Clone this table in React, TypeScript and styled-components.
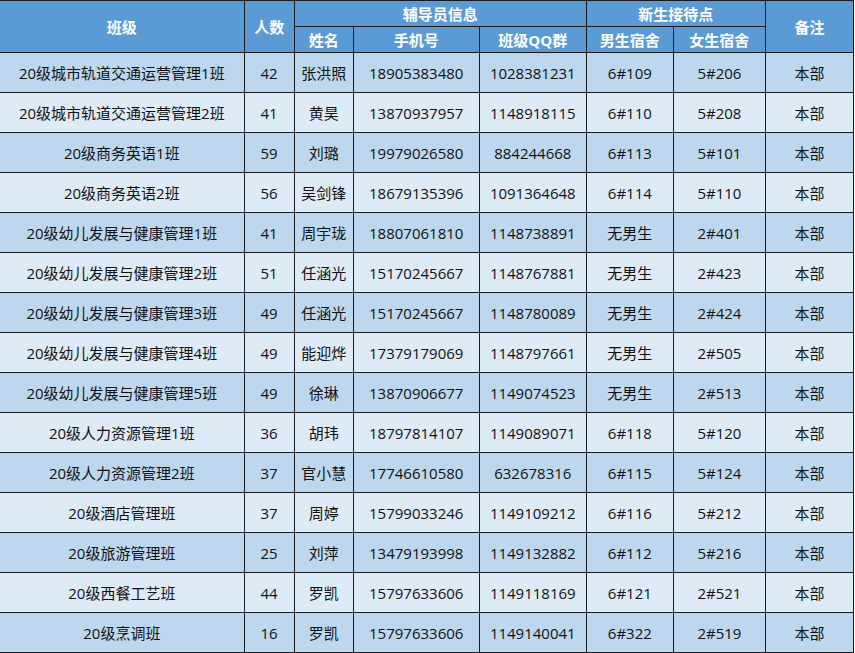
import React from 'react';
import styled, { createGlobalStyle } from 'styled-components';

const ROWS = [
  ['20级城市轨道交通运营管理1班', '42', '张洪照', '18905383480', '1028381231', '6#109', '5#206'],
  ['20级城市轨道交通运营管理2班', '41', '黄昊', '13870937957', '1148918115', '6#110', '5#208'],
  ['20级商务英语1班', '59', '刘璐', '19979026580', '884244668', '6#113', '5#101'],
  ['20级商务英语2班', '56', '吴剑锋', '18679135396', '1091364648', '6#114', '5#110'],
  ['20级幼儿发展与健康管理1班', '41', '周宇珑', '18807061810', '1148738891', '无男生', '2#401'],
  ['20级幼儿发展与健康管理2班', '51', '任涵光', '15170245667', '1148767881', '无男生', '2#423'],
  ['20级幼儿发展与健康管理3班', '49', '任涵光', '15170245667', '1148780089', '无男生', '2#424'],
  ['20级幼儿发展与健康管理4班', '49', '能迎烨', '17379179069', '1148797661', '无男生', '2#505'],
  ['20级幼儿发展与健康管理5班', '49', '徐琳', '13870906677', '1149074523', '无男生', '2#513'],
  ['20级人力资源管理1班', '36', '胡玮', '18797814107', '1149089071', '6#118', '5#120'],
  ['20级人力资源管理2班', '37', '官小慧', '17746610580', '632678316', '6#115', '5#124'],
  ['20级酒店管理班', '37', '周婷', '15799033246', '1149109212', '6#116', '5#212'],
  ['20级旅游管理班', '25', '刘萍', '13479193998', '1149132882', '6#112', '5#216'],
  ['20级西餐工艺班', '44', '罗凯', '15797633606', '1149118169', '6#121', '2#521'],
  ['20级烹调班', '16', '罗凯', '15797633606', '1149140041', '6#322', '2#519'],
];

const COL_WIDTHS = [244, 50, 59, 126, 107, 87, 92, 88];

const GlobalStyle = createGlobalStyle`
  body {
    margin: 0;
    background: #ffffff;
    font-family: "Open Sans", "Noto Sans CJK SC", sans-serif;
  }
`;

const Table = styled.table`
  border-collapse: collapse;
  table-layout: fixed;
  width: 854px;
  font-size: 15px;
  color: #111111;
`;

const HeadRow = styled.tr`
  height: 26px;
`;

const HeadCell = styled.th`
  padding: 0;
  background: #5b9bd5;
  color: #ffffff;
  font-weight: bold;
  font-size: 15px;
  line-height: 18px;
  text-align: center;
  vertical-align: middle;
  border: 1px solid #1a1a1a;
  &:first-child {
    border-left: none;
  }
`;

const SubHeadRow = styled(HeadRow)`
  & > th:first-child {
    border-left: 1px solid #1a1a1a;
  }
`;

const Row = styled.tr<{ shade: 'dark' | 'light' }>`
  height: 40px;
  background: ${(p) => (p.shade === 'dark' ? '#bdd7ee' : '#ddebf7')};
`;

const Cell = styled.td`
  padding: 0;
  line-height: 18px;
  text-align: center;
  vertical-align: middle;
  white-space: nowrap;
  border: 1px solid #1a1a1a;
  &:first-child {
    border-left: none;
  }
`;

export default function App() {
  return (
    <>
      <GlobalStyle />
      <Table>
        <colgroup>
          {COL_WIDTHS.map((w, i) => (
            <col key={i} style={{ width: w }} />
          ))}
        </colgroup>
        <thead>
          <HeadRow>
            <HeadCell rowSpan={2}>班级</HeadCell>
            <HeadCell rowSpan={2}>人数</HeadCell>
            <HeadCell colSpan={3}>辅导员信息</HeadCell>
            <HeadCell colSpan={2}>新生接待点</HeadCell>
            <HeadCell rowSpan={2}>备注</HeadCell>
          </HeadRow>
          <SubHeadRow>
            <HeadCell>姓名</HeadCell>
            <HeadCell>手机号</HeadCell>
            <HeadCell>班级QQ群</HeadCell>
            <HeadCell>男生宿舍</HeadCell>
            <HeadCell>女生宿舍</HeadCell>
          </SubHeadRow>
        </thead>
        <tbody>
          {ROWS.map((r, i) => (
            <Row key={i} shade={i % 2 === 0 ? 'dark' : 'light'}>
              {r.map((v, j) => (
                <Cell key={j}>{v}</Cell>
              ))}
              <Cell>本部</Cell>
            </Row>
          ))}
        </tbody>
      </Table>
    </>
  );
}
